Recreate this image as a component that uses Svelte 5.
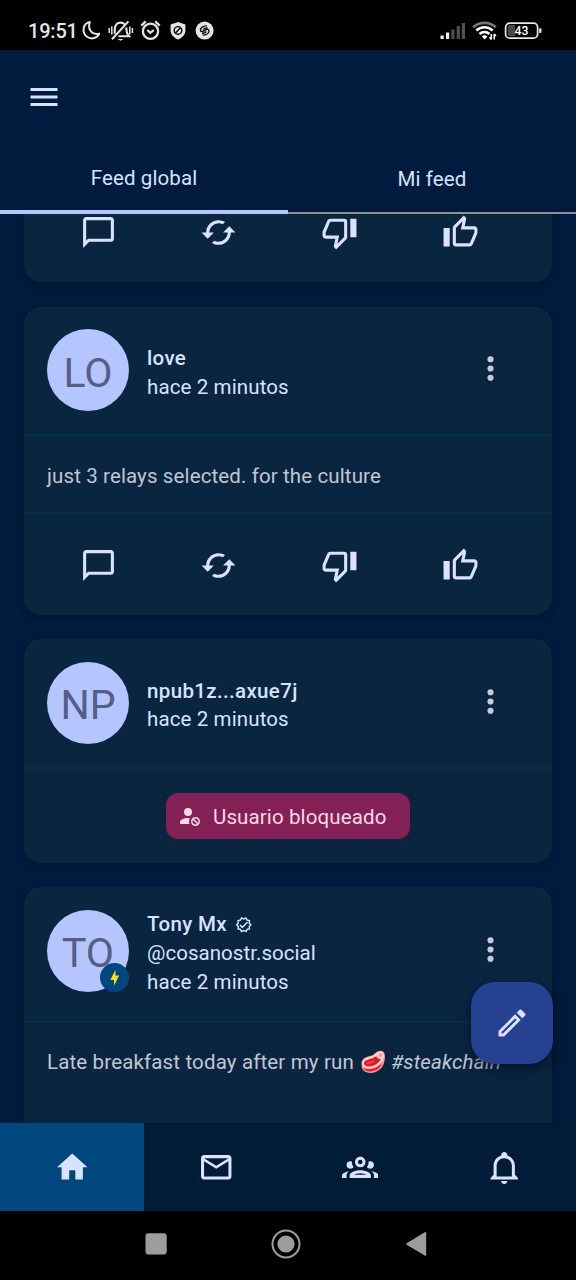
<script>
  const icons = {
    menu: 'M3 6H21V8H3V6M3 11H21V13H3V11M3 16H21V18H3V16Z',
    message: 'M20 2H4C2.9 2 2 2.9 2 4V22L6 18H20C21.1 18 22 17.1 22 16V4C22 2.9 21.1 2 20 2M20 16H5.2L4 17.2V4H20V16Z',
    cached: 'M19 8L15 12H18A6 6 0 0 1 12 18C11 18 10.03 17.75 9.2 17.3L7.74 18.76C8.97 19.54 10.43 20 12 20A8 8 0 0 0 20 12H23M6 12A6 6 0 0 1 12 6C13 6 13.97 6.25 14.8 6.7L16.26 5.24C15.03 4.46 13.57 4 12 4A8 8 0 0 0 4 12H1L5 16L9 12',
    down: 'M19 15V3H23V15H19M15 3A2 2 0 0 1 17 5V15C17 15.55 16.78 16.05 16.41 16.41L9.83 23L8.77 21.94C8.5 21.67 8.33 21.3 8.33 20.88L8.36 20.57L9.31 16H3C1.89 16 1 15.1 1 14V12C1 11.74 1.05 11.5 1.14 11.27L4.16 4.22C4.46 3.5 5.17 3 6 3H15M15 5H5.97L3 12V14H11.78L10.65 19.32L15 14.97V5Z',
    up: 'M5 9V21H1V9H5M9 21A2 2 0 0 1 7 19V9C7 8.45 7.22 7.95 7.59 7.59L14.17 1L15.23 2.06C15.5 2.33 15.67 2.7 15.67 3.11L15.64 3.43L14.69 8H21C22.11 8 23 8.9 23 10V12C23 12.26 22.95 12.5 22.86 12.73L19.84 19.78C19.54 20.5 18.83 21 18 21H9M9 19H18.03L21 12V10H12.21L13.34 4.68L9 9.03V19Z',
    dots: 'M12 16A2 2 0 0 1 14 18A2 2 0 0 1 12 20A2 2 0 0 1 10 18A2 2 0 0 1 12 16M12 10A2 2 0 0 1 14 12A2 2 0 0 1 12 14A2 2 0 0 1 10 12A2 2 0 0 1 12 10M12 4A2 2 0 0 1 14 6A2 2 0 0 1 12 8A2 2 0 0 1 10 6A2 2 0 0 1 12 4Z',
    home: 'M10 20V14H14V20H19V12H22L12 3L2 12H5V20H10Z',
    email: 'M22 6C22 4.9 21.1 4 20 4H4C2.9 4 2 4.9 2 6V18C2 19.1 2.9 20 4 20H20C21.1 20 22 19.1 22 18V6M20 6L12 11L4 6H20M20 18H4V8L12 13L20 8V18Z',
    group: 'M12 5A3.5 3.5 0 0 0 8.5 8.5A3.5 3.5 0 0 0 12 12A3.5 3.5 0 0 0 15.5 8.5A3.5 3.5 0 0 0 12 5M12 7A1.5 1.5 0 0 1 13.5 8.5A1.5 1.5 0 0 1 12 10A1.5 1.5 0 0 1 10.5 8.5A1.5 1.5 0 0 1 12 7M5.5 8A2.5 2.5 0 0 0 3 10.5C3 11.44 3.53 12.25 4.29 12.68C4.65 12.88 5.06 13 5.5 13C5.94 13 6.35 12.88 6.71 12.68C7.08 12.47 7.39 12.17 7.62 11.81C6.89 10.86 6.5 9.7 6.5 8.5C6.5 8.41 6.5 8.31 6.5 8.22C6.2 8.08 5.86 8 5.5 8M18.5 8C18.14 8 17.8 8.08 17.5 8.22C17.5 8.31 17.5 8.41 17.5 8.5C17.5 9.7 17.11 10.86 16.38 11.81C16.5 12 16.63 12.15 16.78 12.3C16.94 12.45 17.1 12.58 17.29 12.68C17.65 12.88 18.06 13 18.5 13C18.94 13 19.35 12.88 19.71 12.68C20.47 12.25 21 11.44 21 10.5A2.5 2.5 0 0 0 18.5 8M12 14C9.66 14 5 15.17 5 17.5V19H19V17.5C19 15.17 14.34 14 12 14M4.71 14.55C2.78 14.78 0 15.76 0 17.5V19H3V17.07C3 16.06 3.69 15.22 4.71 14.55M19.29 14.55C20.31 15.22 21 16.06 21 17.07V19H24V17.5C24 15.76 21.22 14.78 19.29 14.55M12 16C13.53 16 15.24 16.5 16.23 17H7.77C8.76 16.5 10.47 16 12 16Z',
    bell: 'M10 21H14C14 22.1 13.1 23 12 23S10 22.1 10 21M21 19V20H3V19L5 17V11C5 7.9 7 5.2 10 4.3V4C10 2.9 10.9 2 12 2S14 2.9 14 4V4.3C17 5.2 19 7.9 19 11V17L21 19M17 11C17 8.2 14.8 6 12 6S7 8.2 7 11V18H17V11Z',
    pencil: 'M14.06 9L15 9.94L5.92 19H5V18.08L14.06 9M17.66 3C17.41 3 17.15 3.1 16.96 3.29L15.13 5.12L18.88 8.87L20.71 7.04C21.1 6.65 21.1 6 20.71 5.63L18.37 3.29C18.17 3.09 17.92 3 17.66 3M14.06 6.19L3 17.25V21H6.75L17.81 9.94L14.06 6.19Z',
    cancel: 'M10 4A4 4 0 0 0 6 8A4 4 0 0 0 10 12A4 4 0 0 0 14 8A4 4 0 0 0 10 4M17.5 13C15 13 13 15 13 17.5C13 20 15 22 17.5 22C20 22 22 20 22 17.5C22 15 20 13 17.5 13M10 14C5.58 14 2 15.79 2 18V20H11.5A6.5 6.5 0 0 1 11 17.5A6.5 6.5 0 0 1 11.95 14.14C11.32 14.06 10.68 14 10 14M17.5 14.5C19.16 14.5 20.5 15.84 20.5 17.5C20.5 18.06 20.35 18.58 20.08 19L16 14.92C16.42 14.65 16.94 14.5 17.5 14.5M14.92 16L19 20.08C18.58 20.35 18.06 20.5 17.5 20.5C15.84 20.5 14.5 19.16 14.5 17.5C14.5 16.94 14.65 16.42 14.92 16Z',
    verified: 'M23 12L20.56 14.78L20.9 18.46L17.29 19.28L15.4 22.46L12 21L8.6 22.47L6.71 19.29L3.1 18.47L3.44 14.78L1 12L3.44 9.21L3.1 5.53L6.71 4.72L8.6 1.54L12 3L15.4 1.54L17.29 4.72L20.9 5.54L20.56 9.22L23 12M20.33 12L18.5 9.89L18.74 7.1L16 6.5L14.58 4.07L12 5.18L9.42 4.07L8 6.5L5.26 7.09L5.5 9.88L3.67 12L5.5 14.1L5.26 16.9L8 17.5L9.42 19.93L12 18.81L14.58 19.92L16 17.5L18.74 16.89L18.5 14.1L20.33 12M10 17L6 13L7.41 11.59L10 14.17L16.59 7.58L18 9L10 17Z',
    bolt: 'M11 15H6L13 1V9H18L11 23V15Z',
  };
  const posts = [
    { initials: 'LO', name: 'love', text: 'just 3 relays selected. for the culture', actions: true },
    { initials: 'NP', name: 'npub1z...axue7j', blocked: true },
    { initials: 'TO', name: 'Tony Mx', handle: '@cosanostr.social', verified: true, zap: true, text: 'Late breakfast today after my run', tag: '#steakchain' },
  ];
  const nav = ['home', 'email', 'group', 'bell'];
</script>

{#snippet icon(name, size)}
  <svg class="icon" viewBox="0 0 24 24" width={size} height={size} aria-hidden="true"><path fill-rule="evenodd" d={icons[name]} /></svg>
{/snippet}

{#snippet actionRow()}
  <div class="actions">
    {#each ['message', 'cached', 'down', 'up'] as a}
      <button class="action" aria-label={a}>{@render icon(a, 37)}</button>
    {/each}
  </div>
{/snippet}

<div class="screen">
  <div class="status">
    <span class="clock">19:51</span>
    <svg class="status-left" viewBox="0 0 136 24" width="136" height="24" fill="none" stroke="#e4e4e4" stroke-width="2">
      <path d="M8.8 4C1.6 5.5 0.6 14.5 6 18.8C10.4 22 16.4 20 18.3 15.6C11.8 17.6 6.2 12 8.8 4Z" stroke-linejoin="round" />
      <g stroke-width="2.1">
        <path d="M33.4 15.8C34 14 33.7 12.5 33.8 11C34 7 36.4 4.6 39.5 4.6C41.3 4.6 42.8 5.4 43.8 6.4M45.3 9.5C45.3 13.5 45.5 15.5 48 18.2H37.5M31 21.2L47.4 3.4" />
        <path d="M36.4 21H42.6L39.5 22.8Z" fill="#e4e4e4" stroke="none" />
        <path d="M28.2 10V15M30.8 8.6V16.4M48.8 8.6V16.4M51.4 10V15" stroke-width="1.5" />
      </g>
      <circle cx="69.5" cy="13.2" r="7.6" stroke-width="2.3" />
      <path d="M66.3 12L69.3 14.8L72.8 12.2M60.3 7.6L64.7 3.4M78.7 7.6L74.3 3.4" stroke-width="2.3" />
      <path d="M97 4L104.4 6.4V12.5C104.4 16.6 101 20 97 21.6C93 20 89.6 16.6 89.6 12.5V6.4Z" fill="#e4e4e4" stroke="none" />
      <circle cx="97" cy="12.4" r="3.8" stroke="#000" stroke-width="1.4" /><path d="M94.5 15L99.5 9.8" stroke="#000" stroke-width="1.4" />
      <circle cx="123.6" cy="12.6" r="9" fill="#e4e4e4" stroke="none" />
      <path d="M125.8 7.6C122 8 118.6 10.3 119.5 12.6C120.4 14.4 123 13.2 124.2 12C125.6 10.8 128 11 128 13C128 15.4 124.8 17 121.8 17.2M126.6 9.9C124.6 9.7 123 10.6 122.2 11.6M121 15.2C123 15.4 124.6 14.4 125.4 13.5" stroke="#000" stroke-width="1.3" />
    </svg>
    <svg class="status-right" viewBox="0 0 104 24" width="104" height="24">
      <g fill="#eee"><rect x="0.5" y="16.5" width="3.2" height="3.5" /><rect x="6" y="13.5" width="3.2" height="6.5" /></g>
      <g fill="#505050"><rect x="11.3" y="10.5" width="3.2" height="9.5" /><rect x="16.7" y="7" width="3.2" height="13" /><rect x="21.8" y="4" width="3.2" height="16" /></g>
      <g fill="none" stroke-width="2.6"><path d="M33.2 8.2C39.5 2.4 49.5 2.4 55.8 8.2" stroke="#777" /><path d="M36.3 11.5C41 7.2 48 7.2 52.7 11.5M39.5 15C42.3 12.3 46.6 12.3 49.4 15" stroke="#fff" /></g>
      <path d="M41.8 17.4C43.5 15.8 45.7 15.8 47.4 17.4L44.6 20.4Z" fill="#fff" />
      <path d="M51.3 15V20.4M51.3 20.4L49.5 18.3M54.2 20.4V15M54.2 15L56 17" fill="none" stroke="#fff" stroke-width="1.5" />
      <rect x="65.6" y="4.1" width="32" height="15" rx="4.2" fill="none" stroke="#e8e8e8" stroke-width="1.7" />
      <path d="M70 6H75V17.3H70Q67.7 17.3 67.7 15V8.3Q67.7 6 70 6Z" fill="#484848" />
      <path d="M99.2 9.2H100.4Q101.4 9.2 101.4 10.2V13Q101.4 14 100.4 14H99.2Z" fill="#e8e8e8" />
      <text x="81.4" y="16.1" text-anchor="middle" font-size="12.2" font-weight="500" letter-spacing="0" fill="#fff">43</text>
    </svg>
  </div>

  <header>
    <button class="menu" aria-label="Menu">{@render icon('menu', 36)}</button>
    <div class="tabs">
      <button class="tab active">Feed global</button>
      <button class="tab">Mi feed</button>
    </div>
  </header>

  <main>
    <div class="feed">
      <article class="card partial">{@render actionRow()}</article>
      {#each posts as p}
        <article class="card">
          <div class="head" class:tall={p.handle}>
            <div class="avatar">
              <span>{p.initials}</span>
              {#if p.zap}<i class="zap">{@render icon('bolt', 17.5)}</i>{/if}
            </div>
            <div class="who">
              <div class="name">{p.name}{#if p.verified}{@render icon('verified', 17.5)}{/if}</div>
              {#if p.handle}<div class="handle">{p.handle}</div>{/if}
              <div>hace 2 minutos</div>
            </div>
            <button class="more" aria-label="Más">{@render icon('dots', 37)}</button>
          </div>
          {#if p.blocked}
            <div class="blocked"><div class="chip">{@render icon('cancel', 24)}<span>Usuario bloqueado</span></div></div>
          {:else}
            <div class="text">
              {p.text}{#if p.tag}<svg class="steak" viewBox="0 0 26 26" width="26" height="26">
                <path d="M1.5 14C2 9 7 7.8 12 6.5C15 5.6 16 2 20.5 1.8C25 2 25.5 6.5 24.6 11C24 16 21.5 20.5 15.5 23C9 25.4 3 23 1.8 18.5Z" fill="#ff9d9a" />
                <path d="M2 14C2.5 9.8 7 8.4 12 7C15.5 6 16.5 2.5 20.3 2.4C24.2 2.6 24.5 6.5 23.2 10C21.5 14.5 17.5 17.8 12 19C6.5 20 2 18.4 2 14Z" fill="#ffd2cc" />
                <path d="M4 14C4.5 10.8 9 10.5 12.5 9.2C15 8.2 16.5 6.6 17.2 8.5C18.2 10.8 20.5 9 20.6 10.4C19 14 15 16.5 11 17.2C7 17.8 3.8 17 4 14Z" fill="#df1b2b" />
                <path d="M3 19C8 21.5 18 20 22.5 13C21.5 17.5 18.5 20.4 14.5 21.8C9.5 23.5 4.5 22 3 19Z" fill="#e51c2b" />
                <circle cx="20.3" cy="6" r="2" fill="#f5a09b" />
                <path d="M7 14.3Q11 14.2 14 11.7" fill="none" stroke="#ff7379" stroke-width="1" />
              </svg><em>{p.tag}</em>{/if}
            </div>
            {#if p.actions}{@render actionRow()}{/if}
          {/if}
        </article>
      {/each}
    </div>
    <button class="fab" aria-label="Escribir">{@render icon('pencil', 36)}</button>
  </main>

  <nav>
    {#each nav as n, i}
      <button class="nav-item" class:on={i === 0} aria-label={n}>{@render icon(n, 36.5)}</button>
    {/each}
  </nav>

  <div class="system">
    <svg viewBox="0 0 30 30" width="30" height="30"><rect x="4.5" y="4.2" width="21.2" height="21.2" rx="3" fill="#9d9d9d" /></svg>
    <svg viewBox="0 0 30 30" width="30" height="30"><circle cx="15" cy="15" r="13.5" fill="none" stroke="#9d9d9d" stroke-width="2" /><circle cx="15" cy="15" r="8.6" fill="#9d9d9d" /></svg>
    <svg viewBox="0 0 30 30" width="30" height="30"><path d="M5.6 14.2L23.8 3.2Q25.2 2.5 25.2 4V26Q25.2 27.3 23.8 26.6L5.6 15.8Q4.6 15 5.6 14.2Z" fill="#9d9d9d" /></svg>
  </div>
</div>

<style>
  :global(body) { margin: 0; background: #000; }
  .screen { width: 576px; height: 1280px; overflow: hidden; display: flex; flex-direction: column; background: #001b3d; color: #d6e3ff; font-family: Roboto, sans-serif; font-size: 20.5px; line-height: 28.6px; letter-spacing: 0.12px; }
  .screen :global(*) { box-sizing: border-box; }
  button { appearance: none; border: 0; padding: 0; background: none; color: inherit; font: inherit; letter-spacing: inherit; display: flex; align-items: center; justify-content: center; }
  .icon { display: block; flex: none; fill: currentColor; }
  .status { flex: none; height: 50px; background: #000; display: flex; align-items: center; padding: 12px 32.5px 0 28px; color: #e4e4e4; }
  .clock { font-size: 20px; font-weight: 500; letter-spacing: -0.2px; width: 53px; padding-top: 1px; }
  .status-left { margin-top: -3px; }
  .status-right { margin: -1px 0 0 auto; }
  header { flex: none; height: 164px; display: flex; flex-direction: column; }
  .menu { width: 88px; height: 93px; }
  .tabs { flex: 1; display: flex; }
  .tab { width: 288px; padding-top: 3px; border-bottom: 2px solid #8e9099; }
  .tab.active { border-bottom: 4px solid #b4c5ff; }
  main { flex: 1; min-height: 0; position: relative; overflow: hidden; }
  .feed { padding: 0 24px; display: flex; flex-direction: column; gap: 24.3px; }
  .card { flex: none; background: #0a2540; border-radius: 17px; box-shadow: 0 2px 6px rgba(0, 8, 20, 0.35); }
  .partial { border-radius: 0 0 17px 17px; margin-top: -32.7px; }
  .head { height: 129.5px; padding: 0 42.5px 0 23px; display: flex; align-items: center; border-bottom: 2px solid #032e50; }
  .head.tall { height: 135.5px; }
  .tall .avatar, .tall .more { margin-bottom: 6px; }
  .avatar { position: relative; width: 82px; height: 82px; border-radius: 50%; background: #b4c5ff; color: #565e83; display: flex; align-items: center; justify-content: center; font-size: 41px; letter-spacing: 0; }
  .avatar span { padding-top: 5px; }
  .zap { position: absolute; right: 0; bottom: 0; width: 29px; height: 29px; border-radius: 50%; background: #00477f; color: #ffdc18; display: flex; align-items: center; justify-content: center; }
  .who { margin-left: 18px; flex: 1; padding-top: 4.4px; }
  .tall .who { padding: 0 0 1.5px; }
  .name { font-weight: 500; letter-spacing: 0.35px; display: flex; align-items: center; gap: 8px; }
  .handle { letter-spacing: 0.04px; }
  .more { width: 38px; height: 50px; color: #c5cbdc; margin-top: -3px; }
  .text { height: 78px; padding: 4px 23px 0; display: flex; align-items: center; color: #c1c6d4; border-bottom: 2px solid #032e50; }
  .card:last-child .text { height: 120px; align-items: flex-start; padding-top: 25px; border: 0; letter-spacing: 0.15px; }
  .steak { margin: 1px 5px 0 6px; flex: none; }
  .actions { height: 101px; padding: 1px 31.5px 0 14px; display: flex; }
  .action { flex: 1; color: #dae2ff; }
  .blocked { height: 94px; display: flex; align-items: center; justify-content: center; }
  .chip { height: 46px; width: 244px; border-radius: 12px; background: #832156; color: #ffd9e4; display: flex; align-items: center; padding-left: 12px; gap: 11px; }
  .chip span { padding-top: 3px; }
  .fab { position: absolute; left: 470.5px; top: 768px; width: 82px; height: 82px; border-radius: 24px; background: #264191; color: #dae2ff; box-shadow: 0 5px 12px rgba(0, 10, 25, 0.55); }
  nav { flex: none; height: 88.5px; display: flex; background: #001c37; }
  .nav-item { flex: 1; color: #dae2ff; }
  .nav-item.on { background: #00477f; }
  .system { flex: none; height: 69px; background: #000; display: flex; align-items: center; justify-content: center; gap: 100px; padding: 0 4px 4px 0; }
</style>
